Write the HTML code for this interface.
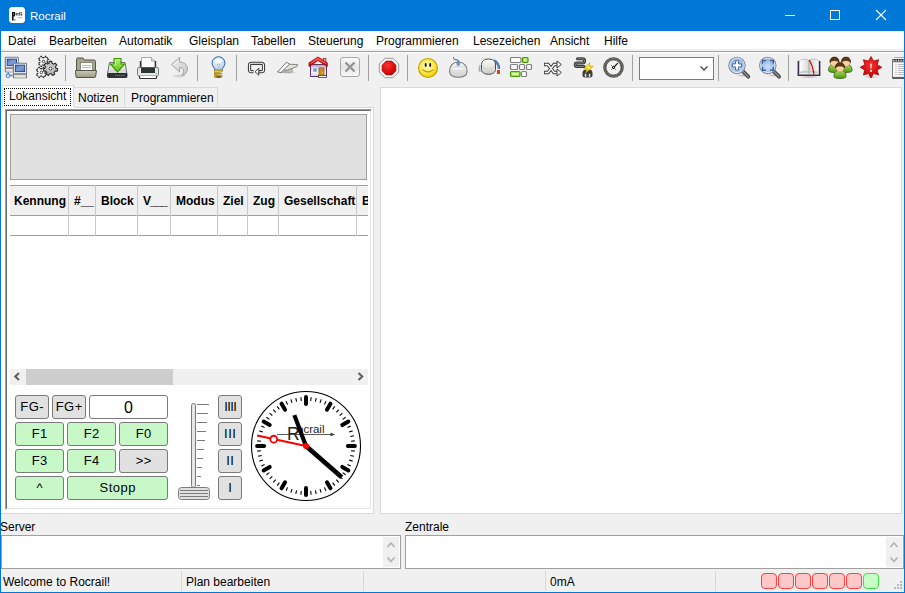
<!DOCTYPE html>
<html><head><meta charset="utf-8">
<style>
*{margin:0;padding:0;box-sizing:border-box}
html,body{width:905px;height:593px;overflow:hidden;background:#f0f0f0;font-family:"Liberation Sans",sans-serif;font-size:12px;color:#000}
.a{position:absolute}
#title{left:0;top:0;width:905px;height:31px;background:#0078d7}
#menu{left:1px;top:31px;width:903px;height:18px;background:#fff}
.mi{position:absolute;top:34px;font-size:12px;line-height:14px;white-space:nowrap}
#tbline{left:1px;top:51px;width:903px;height:1px;background:#a0a0a0}
.sep{position:absolute;top:55px;width:1px;height:26px;background:#a0a0a0}
.ic{position:absolute;top:56px;width:24px;height:24px}
.tab{position:absolute;top:87px;height:20px;border:1px solid #d9d9d9;border-bottom:none;background:#f0f0f0;line-height:18px;padding-left:4px;white-space:nowrap}
.btn{position:absolute;width:49px;height:24px;border:1px solid #7a7a7a;border-radius:3px;background:#c8f8c8;text-align:center;line-height:22px;font-size:13px;letter-spacing:0.5px;text-indent:0.5px}
.gray{background:#e1e1e1}
.sb{position:absolute;height:23px;background:#f0f0f0}
.col{position:absolute;top:0;width:1px;height:51px;background:#c8c8c8}
.th{position:absolute;top:9px;font-weight:bold;font-size:12px;line-height:14px;white-space:nowrap}
.led{position:absolute;top:573px;width:16px;height:16px;border:1px solid #ff4040;background:#ffc8c8;border-radius:4px}
</style></head><body>
<!-- window border -->
<div class="a" style="left:0;top:0;width:1px;height:593px;background:#0078d7"></div>
<div class="a" style="left:904px;top:0;width:1px;height:593px;background:#0078d7"></div>
<div class="a" style="left:0;top:592px;width:905px;height:1px;background:#0078d7"></div>

<div id="title" class="a">
  <svg class="a" style="left:9px;top:7px" width="16" height="16"><path d="M2 0h12l2 2v12l-2 2H2l-2-2V2z" fill="#fff"/><g fill="#111"><rect x="3" y="5" width="1.6" height="8.5"/><rect x="3" y="5" width="3" height="1.2"/><rect x="5" y="5.5" width="1.2" height="2.5"/><rect x="3" y="8" width="3" height="1.3"/><rect x="5.3" y="12.3" width="1" height="1.2"/></g><g fill="#333"><rect x="6.8" y="6" width="1" height="2.4"/><rect x="8.2" y="6" width="1.4" height="0.9"/><rect x="8.2" y="7.6" width="1.4" height="0.9"/><rect x="10.2" y="5.3" width="1" height="3.2"/><rect x="11.5" y="5.3" width="1.6" height="0.9"/><rect x="11.8" y="6.8" width="1.4" height="1.7"/></g><rect x="9" y="10" width="4.5" height="0.8" fill="#aaa"/></svg>
  <div class="a" style="left:30px;top:9px;color:#fff;font-size:11.5px;line-height:14px">Rocrail</div>
  <div class="a" style="left:785px;top:15px;width:10px;height:1px;background:#fff"></div>
  <div class="a" style="left:830px;top:10px;width:10px;height:10px;border:1px solid #fff"></div>
  <svg class="a" style="left:875px;top:9px" width="12" height="12"><path d="M1 1L11 11M11 1L1 11" stroke="#fff" stroke-width="1.1"/></svg>
</div>

<div id="menu" class="a"></div>
<div class="mi" style="left:8px">Datei</div>
<div class="mi" style="left:49px">Bearbeiten</div>
<div class="mi" style="left:119px">Automatik</div>
<div class="mi" style="left:189px">Gleisplan</div>
<div class="mi" style="left:251px">Tabellen</div>
<div class="mi" style="left:308px">Steuerung</div>
<div class="mi" style="left:376px">Programmieren</div>
<div class="mi" style="left:473px">Lesezeichen</div>
<div class="mi" style="left:550px">Ansicht</div>
<div class="mi" style="left:604px">Hilfe</div>
<div id="tbline" class="a"></div><div class="a" style="left:1px;top:50px;width:903px;height:1px;background:#f4f4f4"></div><div class="a" style="left:1px;top:52px;width:903px;height:1px;background:#fff"></div>

<!-- toolbar separators -->
<div class="sep" style="left:65px"></div>
<div class="sep" style="left:197px"></div>
<div class="sep" style="left:236px"></div>
<div class="sep" style="left:368px"></div>
<div class="sep" style="left:407px"></div>
<div class="sep" style="left:632px"></div>
<div class="sep" style="left:718px"></div>
<div class="sep" style="left:788px"></div>

<!-- combo -->
<div class="a" style="left:639px;top:57px;width:75px;height:23px;background:#fff;border:1px solid #7a7a7a"></div>
<!-- ICONS --><svg class="a" style="left:0;top:52px" width="904" height="32" viewBox="0 52 904 32"><defs>
<linearGradient id="gScr" x1="0" y1="0" x2="1" y2="1"><stop offset="0" stop-color="#4a70b8"/><stop offset="0.5" stop-color="#7f9fd6"/><stop offset="1" stop-color="#4a74bc"/></linearGradient>
<linearGradient id="gFold" x1="0" y1="0" x2="0" y2="1"><stop offset="0" stop-color="#c8c8b4"/><stop offset="1" stop-color="#9a9a84"/></linearGradient>
<linearGradient id="gDrive" x1="0" y1="0" x2="0" y2="1"><stop offset="0" stop-color="#f4f4f4"/><stop offset="1" stop-color="#d6d6d6"/></linearGradient>
<linearGradient id="gGreen" x1="0" y1="0" x2="0" y2="1"><stop offset="0" stop-color="#b8f080"/><stop offset="1" stop-color="#5cc010"/></linearGradient>
<radialGradient id="gBulb" cx="0.45" cy="0.35" r="0.6"><stop offset="0" stop-color="#ffffff"/><stop offset="1" stop-color="#b6cdea"/></radialGradient>
<linearGradient id="gGold" x1="0" y1="0" x2="0" y2="1"><stop offset="0" stop-color="#f0dc60"/><stop offset="1" stop-color="#c4a000"/></linearGradient>
<linearGradient id="gWall" x1="0" y1="0" x2="0" y2="1"><stop offset="0" stop-color="#c0a0cc"/><stop offset="0.7" stop-color="#f6f0f8"/><stop offset="1" stop-color="#e0c8e6"/></linearGradient>
<linearGradient id="gXbox" x1="0" y1="0" x2="0" y2="1"><stop offset="0" stop-color="#fbfbfb"/><stop offset="0.5" stop-color="#e6e6e6"/><stop offset="1" stop-color="#fafafa"/></linearGradient>
<linearGradient id="gKnob" x1="0" y1="0" x2="0" y2="1"><stop offset="0" stop-color="#fafaf8"/><stop offset="0.6" stop-color="#e0e0dc"/><stop offset="1" stop-color="#c8c8c4"/></linearGradient>
<linearGradient id="gPageL" x1="0" y1="0" x2="1" y2="0"><stop offset="0" stop-color="#fff"/><stop offset="1" stop-color="#d8d8d8"/></linearGradient><linearGradient id="gPageR" x1="0" y1="0" x2="1" y2="0"><stop offset="0" stop-color="#d0d0d0"/><stop offset="1" stop-color="#fafafa"/></linearGradient>
<radialGradient id="gGear" cx="0.4" cy="0.4" r="0.7"><stop offset="0" stop-color="#e8e8e8"/><stop offset="1" stop-color="#9a9a98"/></radialGradient>
<linearGradient id="gUndo" x1="0" y1="0" x2="1" y2="1"><stop offset="0" stop-color="#f6f6f6"/><stop offset="1" stop-color="#c4c4c4"/></linearGradient>
<linearGradient id="gRoof" x1="0" y1="0" x2="0" y2="1"><stop offset="0" stop-color="#ff4040"/><stop offset="1" stop-color="#c00000"/></linearGradient>
<radialGradient id="gRed" cx="0.4" cy="0.3" r="0.7"><stop offset="0" stop-color="#ff3030"/><stop offset="1" stop-color="#c00000"/></radialGradient>
<radialGradient id="gSmile" cx="0.45" cy="0.4" r="0.6"><stop offset="0" stop-color="#fffbd0"/><stop offset="0.6" stop-color="#fce94f"/><stop offset="1" stop-color="#e8c800"/></radialGradient>
<linearGradient id="gMouse" x1="0" y1="0" x2="0" y2="1"><stop offset="0" stop-color="#f8f8f8"/><stop offset="1" stop-color="#cfcfcf"/></linearGradient>
<radialGradient id="gLens" cx="0.5" cy="0.6" r="0.55"><stop offset="0" stop-color="#d0e0f6"/><stop offset="1" stop-color="#86ace0"/></radialGradient>
<linearGradient id="gBody" x1="0" y1="0" x2="0" y2="1"><stop offset="0" stop-color="#b0e070"/><stop offset="1" stop-color="#4e9a06"/></linearGradient>
<radialGradient id="gStar" cx="0.5" cy="0.4" r="0.6"><stop offset="0" stop-color="#ff3030"/><stop offset="1" stop-color="#b80000"/></radialGradient>
<radialGradient id="gShadow" cx="0.5" cy="0.5" r="0.5"><stop offset="0" stop-color="#000" stop-opacity="0.25"/><stop offset="1" stop-color="#000" stop-opacity="0"/></radialGradient>
</defs><path d="M8.3 72v2M9.5 75.5h4" stroke="#5a8fd6" stroke-width="1.4"/><circle cx="8" cy="75.7" r="1.8" fill="#dde8f6" stroke="#5a8fd6" stroke-width="1.2"/><rect x="5.3" y="57.3" width="13" height="10.5" rx="0.8" fill="#fff" stroke="#7b7b7b" stroke-width="1.1"/><rect x="7.1" y="59.099999999999994" width="9.4" height="6.6" fill="url(#gScr)" stroke="#1a3c8a" stroke-width="0.9"/><rect x="5.3" y="68.3" width="13" height="3.5" fill="#d8d8d4" stroke="#7b7b7b" stroke-width="1"/><path d="M6.3 69.6h11" stroke="#f4f4f4" stroke-width="0.6" stroke-dasharray="1 0.6"/><path d="M6.3 71.1h11" stroke="#fff" stroke-width="0.8"/><rect x="13.5" y="63.3" width="13" height="10.5" rx="0.8" fill="#fff" stroke="#7b7b7b" stroke-width="1.1"/><rect x="15.3" y="65.1" width="9.4" height="6.6" fill="url(#gScr)" stroke="#1a3c8a" stroke-width="0.9"/><rect x="13.5" y="74.3" width="13" height="3.5" fill="#d8d8d4" stroke="#7b7b7b" stroke-width="1"/><path d="M14.5 75.6h11" stroke="#f4f4f4" stroke-width="0.6" stroke-dasharray="1 0.6"/><path d="M14.5 77.1h11" stroke="#fff" stroke-width="0.8"/><polygon points="47.21,62.61 48.69,63.50 45.60,66.59 44.71,65.11 42.29,65.11 41.40,66.59 38.31,63.50 39.79,62.61 39.79,60.19 38.31,59.30 41.40,56.21 42.29,57.69 44.71,57.69 45.60,56.21 48.69,59.30 47.21,60.19" fill="#f6f6f6" stroke="#2a2a2a" stroke-width="1.2" stroke-linejoin="round" stroke-dasharray="2.2 0.6"/><circle cx="43.5" cy="61.4" r="1.3" fill="#fff" stroke="#333" stroke-width="0.9"/><polygon points="45.11,73.61 46.59,74.50 43.50,77.59 42.61,76.11 40.19,76.11 39.30,77.59 36.21,74.50 37.69,73.61 37.69,71.19 36.21,70.30 39.30,67.21 40.19,68.69 42.61,68.69 43.50,67.21 46.59,70.30 45.11,71.19" fill="#f6f6f6" stroke="#2a2a2a" stroke-width="1.2" stroke-linejoin="round" stroke-dasharray="2.2 0.6"/><circle cx="41.4" cy="72.4" r="1.3" fill="#fff" stroke="#333" stroke-width="0.9"/><polygon points="49.01,63.31 49.25,61.41 51.75,61.41 51.99,63.31 53.63,64.10 55.26,63.10 56.82,65.06 55.49,66.43 55.89,68.20 57.69,68.86 57.13,71.30 55.23,71.11 54.09,72.53 54.70,74.35 52.45,75.43 51.41,73.82 49.59,73.82 48.55,75.43 46.30,74.35 46.91,72.53 45.77,71.11 43.87,71.30 43.31,68.86 45.11,68.20 45.51,66.43 44.18,65.06 45.74,63.10 47.37,64.10" fill="url(#gGear)" stroke="#2e2e2e" stroke-width="1.1" stroke-linejoin="round"/><circle cx="50.5" cy="68.5" r="3.8" fill="none" stroke="#b8b8b8" stroke-width="1.2"/><circle cx="50.5" cy="68.5" r="1.5" fill="#fff" stroke="#222" stroke-width="0.9"/><path d="M76.5 74V59.5a1.5 1.5 0 0 1 1.5-1.5h5l1.5 2h9.5a1.5 1.5 0 0 1 1.5 1.5V74z" fill="#a4a490" stroke="#55554a"/><rect x="80.5" y="62.5" width="12" height="8" fill="#fff" stroke="#7a7a6a" stroke-width="0.8"/><path d="M82 65.5h9M82 67.5h9" stroke="#b5b5a8" stroke-width="0.9"/><path d="M75.5 70.5h21l-1 6.5a1 1 0 0 1-1 0.5H77a1 1 0 0 1-1-0.5z" fill="url(#gFold)" stroke="#55554a"/><path d="M109.5 62.5h15.5l2 11.5H107.5z" fill="url(#gDrive)" stroke="#6a6a6a" stroke-linejoin="round"/><path d="M110 71.5l2-1h11l2 1" fill="none" stroke="#bbb" stroke-width="0.6"/><rect x="107.5" y="73.5" width="19.5" height="4" rx="1" fill="#2e3436" stroke="#1a1a1a" stroke-width="0.8"/><path d="M115 75.5h10" stroke="#8a8a8a" stroke-width="0.7" stroke-dasharray="1.5 0.5"/><path d="M114 58.5h7v5.5h3.5l-7 8l-7-8h3.5z" fill="url(#gGreen)" stroke="#3f9a00" stroke-width="1.2" stroke-linejoin="round"/><path d="M115.5 60v5h-1.5" fill="none" stroke="#d8ffb0" stroke-width="0.7"/><path d="M141.5 57.5h10l3.5 3.5v7h-13.5z" fill="#fafafa" stroke="#9a9a9a" stroke-width="0.8"/><path d="M151.5 57.5v3.5h3.5" fill="#ddd" stroke="#9a9a9a" stroke-width="0.8"/><path d="M140.5 61v7M155.5 61v7" stroke="#333" stroke-width="1.4"/><rect x="137.5" y="67.5" width="21" height="8.5" rx="1.5" fill="#e8e8e8" stroke="#7a7a7a"/><rect x="141" y="67.5" width="14" height="5.5" fill="#2e3436"/><circle cx="156.3" cy="73.6" r="0.8" fill="#5ee04a"/><path d="M139.5 76v1.5a1 1 0 0 0 1 1h15a1 1 0 0 0 1-1V76" fill="#fff" stroke="#333" stroke-width="1.2"/><ellipse cx="179" cy="76" rx="8" ry="2" fill="url(#gShadow)" opacity="0.7"/><path d="M171.5 64.5L179.6 57.3V62.1C183 62 187.5 64 187.5 68.8C187.5 72 185 75 181.8 75.7C183 73.5 183.8 72 183.5 70C183.2 68.3 182 67.6 179.6 67.6V72Z" fill="url(#gUndo)" stroke="#9a9a9a" stroke-width="0.9" stroke-linejoin="round"/><g transform="translate(0 0.7)"><ellipse cx="218.5" cy="76.5" rx="5" ry="1.4" fill="url(#gShadow)"/><path d="M214.8 69.5c0-2.5-2.8-4-2.8-7a6.5 6.5 0 0 1 13 0c0 3-2.8 4.5-2.8 7z" fill="url(#gBulb)" stroke="#3465a4" stroke-width="1"/><ellipse cx="218.5" cy="59.8" rx="3.8" ry="1.6" fill="#fff" opacity="0.9"/><path d="M217 64.5c0-1.5 3-1.5 3 0s-1.5 1.5-1.5 3" fill="none" stroke="#7ea0cc" stroke-width="0.7"/><path d="M214.5 69.5h8l-0.3 1.6l-7.6 1.2l7.6 0.6l-7.6 1.4l7.6 0.6l-0.5 1.6h-7z" fill="url(#gGold)" stroke="#a08000" stroke-width="0.7" stroke-linejoin="round"/><path d="M216.5 76.2h4" stroke="#333" stroke-width="1.1"/></g><path d="M253.5 71.7H251.5a2 2 0 0 1-2-2V65.3a2 2 0 0 1 2-2H261.5a2 2 0 0 1 2 2V69.7a2 2 0 0 1-2 2H258" fill="none" stroke="#3a3a3a" stroke-width="3.2"/><path d="M253.5 71.7H251.5a2 2 0 0 1-2-2V65.3a2 2 0 0 1 2-2H261.5a2 2 0 0 1 2 2V69.7a2 2 0 0 1-2 2H258" fill="none" stroke="#fff" stroke-width="1.1"/><path d="M255 71.7l3.8-3.5v7z" fill="#fff" stroke="#3a3a3a" stroke-width="1" stroke-linejoin="round"/><ellipse cx="289" cy="72.5" rx="8" ry="1.5" fill="url(#gShadow)"/><path d="M280 72.5l12-4l0.5 3.5z" fill="#c8c8c0" stroke="#9a9a90" stroke-width="0.8" stroke-linejoin="round"/><path d="M284 67.5l5.5-3.2l8 0.2l-0.5 2l-12 4.5z" fill="#e4e4e0" stroke="#7a7a74" stroke-width="0.9" stroke-linejoin="round"/><path d="M277.5 72l9-9.8l3 2l-8.5 8.3z" fill="#f8f8f6" stroke="#6a6a64" stroke-width="0.9" stroke-linejoin="round"/><path d="M310.5 64.5h16v12h-16z" fill="url(#gWall)" stroke="#5c3566"/><rect x="312.8" y="67.8" width="4.4" height="4.4" fill="#729fcf" stroke="#fff" stroke-width="0.8"/><rect x="319" y="68" width="5" height="8.5" fill="#d08a2a" stroke="#8f5902" stroke-width="0.7"/><circle cx="322.6" cy="72.3" r="0.6" fill="#fce94f"/><rect x="318.5" y="75.5" width="8" height="2" fill="#fff" stroke="#3a3a3a" stroke-width="0.8"/><rect x="323.3" y="58.3" width="2.6" height="4.5" fill="#ccc" stroke="#a00" stroke-width="0.7"/><path d="M309 62.8l9-5.8l9.3 5.8v3.7l-9.3-5.9l-9 5.9z" fill="url(#gRoof)" stroke="#a40000" stroke-width="0.8" stroke-linejoin="round"/><path d="M310.5 63.5l7.5-4.8l8 4.8" fill="none" stroke="#ff9090" stroke-width="0.7"/><rect x="340.5" y="57.5" width="19" height="19" rx="2.5" fill="url(#gXbox)" stroke="#a8a8a8"/><path d="M345.5 62.5l9 9M354.5 62.5l-9 9" stroke="#939393" stroke-width="2.4"/><polygon points="398.70,72.02 393.02,77.70 384.98,77.70 379.30,72.02 379.30,63.98 384.98,58.30 393.02,58.30 398.70,63.98" fill="#f4f4f4" stroke="#9a9a9a" stroke-width="1"/><polygon points="395.93,70.87 391.87,74.93 386.13,74.93 382.07,70.87 382.07,65.13 386.13,61.07 391.87,61.07 395.93,65.13" fill="url(#gRed)" stroke="#a00000" stroke-width="0.6"/><circle cx="428" cy="68" r="9.5" fill="url(#gSmile)" stroke="#c4a000" stroke-width="1.1"/><rect x="424.8" y="63" width="1.8" height="3.8" rx="0.9" fill="#111"/><rect x="429.3" y="63" width="1.8" height="3.8" rx="0.9" fill="#111"/><path d="M422.5 69.5q5.5 5 11 0" fill="none" stroke="#c4a000" stroke-width="1.2"/><path d="M453.5 57.2c0 2 0.8 2.6 2.5 2.6h1.2c1 0 1.4 0.8 1.4 2" fill="none" stroke="#555" stroke-width="1"/><path d="M449.5 71c0-5 3.5-9 8.8-9s8.8 4 8.8 9c0 4-2.5 6.3-8.8 6.3s-8.8-2.3-8.8-6.3z" fill="url(#gMouse)" stroke="#7a7a7a" stroke-width="1.1"/><path d="M452 67.3q6.3-1.5 12.6 0" fill="none" stroke="#d0d0d0" stroke-width="0.6"/><path d="M453 68.5q5.3 1 10.6 0" fill="none" stroke="#fff" stroke-width="0.9"/><ellipse cx="458.3" cy="63.3" rx="1.4" ry="2.5" fill="#729fcf" stroke="#3465a4" stroke-width="0.5"/><path d="M494 60.5a9.5 9.5 0 0 1 5 8.5" fill="none" stroke="#5a82b8" stroke-width="2.6"/><path d="M480 72a9.5 9.5 0 0 1 0-7" fill="none" stroke="#9ab4d8" stroke-width="1.6"/><rect x="497" y="70" width="3" height="4" fill="#e83a20"/><path d="M481.5 64.5c0-3.5 3-5.5 7-5.5s7 2 7 5v5.5c0 3-3 4.8-7 4.8s-7-1.8-7-4.8z" fill="url(#gKnob)" stroke="#4a4a4a" stroke-width="1"/><path d="M482 65.5c1 2.5 3.5 3.5 6.5 3.5s5.5-1.5 6.5-4" fill="none" stroke="#c8c8c4" stroke-width="0.7"/><rect x="510.5" y="57.5" width="10.5" height="5" rx="1" fill="#fafafa" stroke="#808080" stroke-width="1.2"/><rect x="522.5" y="57.5" width="5.5" height="5" rx="1" fill="#a0e060" stroke="#4e9a06" stroke-width="1.2"/><rect x="524" y="59" width="2.5" height="2" fill="#d8f8b0"/><rect x="510.5" y="64.5" width="7" height="5" rx="1" fill="#fafafa" stroke="#808080" stroke-width="1.2"/><rect x="519.5" y="64.5" width="5" height="5" rx="1" fill="#fafafa" stroke="#808080" stroke-width="1.2"/><rect x="526.5" y="64.5" width="5" height="5" rx="1" fill="#fafafa" stroke="#808080" stroke-width="1.2"/><rect x="510.5" y="71.5" width="9.5" height="5" rx="1" fill="#a0e060" stroke="#4e9a06" stroke-width="1.2"/><rect x="512" y="73" width="6.5" height="2" fill="#d8f8b0"/><rect x="521.5" y="71.5" width="5" height="5" rx="1" fill="#fafafa" stroke="#808080" stroke-width="1.2"/><path d="M544 64.5h4l6 8h3.5M544 72.5h4l6-8h3.5" fill="none" stroke="#3a3a3a" stroke-width="3.4"/><path d="M544.8 64.5h3.2l6 8h3.5M544.8 72.5h3.2l6-8h3.5" fill="none" stroke="#fff" stroke-width="1.4"/><path d="M557 61l4.3 3.5l-4.3 3.5z M557 69l4.3 3.5l-4.3 3.5z" fill="#fff" stroke="#3a3a3a" stroke-width="1" stroke-linejoin="round"/><path d="M577.5 58.7H582.5a2.15 2.15 0 0 1 0 4.3H577a1.75 1.75 0 0 0 0 3.5H584" fill="none" stroke="#3a3d3a" stroke-width="3" stroke-linecap="round"/><path d="M577.5 58.7H582.5a2.15 2.15 0 0 1 0 4.3H577a1.75 1.75 0 0 0 0 3.5H584" fill="none" stroke="#9a9a9a" stroke-width="0.7"/><path d="M582.5 73c0-2 1-3.3 2.7-3.3c1 0 1.3 0.5 2.3 0.5s1.3-0.5 2.3-0.5c1.7 0 2.7 1.3 2.7 3.3v2.5c0 1.2-1 2-2.5 2h-5c-1.5 0-2.5-0.8-2.5-2z" fill="#3a3d3a"/><rect x="584.8" y="73.8" width="1.5" height="3" fill="#eee"/><rect x="588.8" y="73.8" width="1.5" height="3" fill="#eee"/><path d="M589.8 62.8l-6 6h3.7l-1.8 4l7.5-6.5h-3.8z" fill="#fce94f" stroke="#c4a000" stroke-width="0.8" stroke-linejoin="round"/><circle cx="613.5" cy="67.5" r="9" fill="#f2f2f0" stroke="#4a4c48" stroke-width="2.6"/><circle cx="613.5" cy="67.5" r="9" fill="none" stroke="#8a8c88" stroke-width="0.7"/><circle cx="613.5" cy="67.5" r="7.4" fill="none" stroke="#333" stroke-width="0.6"/><path d="M611 65l5 5M611 70l2.5-2.5" stroke="#444" stroke-width="0.6"/><path d="M613.5 67.5l4.3-4.3" stroke="#111" stroke-width="1.1"/><rect x="612.2" y="66.2" width="2.6" height="2.6" fill="#111" transform="rotate(45 613.5 67.5)"/><circle cx="613.5" cy="67.5" r="0.6" fill="#fff"/><path d="M700.5 66.5l3.5 3.5l3.5-3.5" fill="none" stroke="#333" stroke-width="1.1"/><ellipse cx="743" cy="75.4" rx="7" ry="1.6" fill="url(#gShadow)"/><path d="M743 71.4l5.3 5.3" stroke="#4a4a4a" stroke-width="3.8" stroke-linecap="round"/><path d="M743 71.4l5.3 5.3" stroke="#9a9a9a" stroke-width="1.2" stroke-linecap="round" stroke-dasharray="1 0.8"/><circle cx="737" cy="65.4" r="8.2" fill="url(#gLens)" stroke="#8a8a8a" stroke-width="1.1"/><circle cx="737" cy="65.4" r="7.2" fill="none" stroke="#f4f8fc" stroke-width="0.8"/><path d="M735.5 60.8h3v3.1h3.1v3h-3.1v3.1h-3v-3.1h-3.1v-3h3.1z" fill="#fff" stroke="#3465a4" stroke-width="0.9"/><ellipse cx="773.8" cy="75.4" rx="7" ry="1.6" fill="url(#gShadow)"/><path d="M773.8 71.4l5.3 5.3" stroke="#4a4a4a" stroke-width="3.8" stroke-linecap="round"/><path d="M773.8 71.4l5.3 5.3" stroke="#9a9a9a" stroke-width="1.2" stroke-linecap="round" stroke-dasharray="1 0.8"/><circle cx="767.8" cy="65.4" r="8.2" fill="url(#gLens)" stroke="#8a8a8a" stroke-width="1.1"/><circle cx="767.8" cy="65.4" r="7.2" fill="none" stroke="#f4f8fc" stroke-width="0.8"/><path d="M762.5 63.8v-3.3h3.3M770 60.5h3.3v3.3M773.3 67v3.3h-3.3M765.8 70.3h-3.3V67" fill="none" stroke="#3465a4" stroke-width="1.4"/><ellipse cx="809" cy="77" rx="10" ry="1.5" fill="url(#gShadow)"/><path d="M798.3 61v14.2h21.4V61" fill="#f0f0f0" stroke="#3c2a4a" stroke-width="1.4"/><path d="M799.5 60.5c3-1.8 7-1.8 9.5 0v12c-2.5-1.5-6.5-1.5-9.5 0z" fill="url(#gPageL)" stroke="#9a9a9a" stroke-width="0.5"/><path d="M809 60.5c2.5-1.8 6.5-1.8 9.5 0v12c-3-1.5-7-1.5-9.5 0z" fill="url(#gPageR)" stroke="#9a9a9a" stroke-width="0.5"/><path d="M799 73.5c3-1.5 7-1.5 10 0c3-1.5 7-1.5 10 0" fill="none" stroke="#bbb" stroke-width="0.8"/><path d="M809.2 60c1.5 3 3 5 3.5 8s1 4 1.2 6.5" fill="none" stroke="#cc0000" stroke-width="1.2"/><path d="M828.5 70.5c0-4.5 2.5-6.5 6-6.5s6 2 6 6.5c0 1.2-2 2-6 2s-6-0.8-6-2z" fill="url(#gBody)" stroke="#2e5a06" stroke-width="0.8"/><ellipse cx="834.5" cy="62" rx="4.3" ry="4.6" fill="#fcd0a0" stroke="#9a6a40" stroke-width="0.5"/><path d="M829.9 62.5c-0.3-3.5 1.8-5.5 4.6-5.5s4.9 2 4.6 5.5c-1-1.2-2.5-2-4.6-2s-3.6 0.8-4.6 2z" fill="#5a3818" stroke="#2a1808" stroke-width="0.5"/><path d="M840 70.5c0-4.5 2.5-6.5 6-6.5s6 2 6 6.5c0 1.2-2 2-6 2s-6-0.8-6-2z" fill="url(#gBody)" stroke="#2e5a06" stroke-width="0.8"/><ellipse cx="846" cy="62" rx="4.3" ry="4.6" fill="#fcd0a0" stroke="#9a6a40" stroke-width="0.5"/><path d="M841.4 62.5c-0.3-3.5 1.8-5.5 4.6-5.5s4.9 2 4.6 5.5c-1-1.2-2.5-2-4.6-2s-3.6 0.8-4.6 2z" fill="#5a3818" stroke="#2a1808" stroke-width="0.5"/><path d="M834 76.5c0-4.5 2.5-6.5 6-6.5s6 2 6 6.5c0 1.2-2 2-6 2s-6-0.8-6-2z" fill="url(#gBody)" stroke="#2e5a06" stroke-width="0.8"/><ellipse cx="840" cy="67.5" rx="4.3" ry="4.6" fill="#fcd0a0" stroke="#9a6a40" stroke-width="0.5"/><path d="M835.4 68.0c-0.3-3.5 1.8-5.5 4.6-5.5s4.9 2 4.6 5.5c-1-1.2-2.5-2-4.6-2s-3.6 0.8-4.6 2z" fill="#5a3818" stroke="#2a1808" stroke-width="0.5"/><ellipse cx="871" cy="77" rx="7" ry="1.5" fill="url(#gShadow)"/><polygon points="871.00,56.50 873.60,61.02 878.64,59.66 877.28,64.70 881.80,67.30 877.28,69.90 878.64,74.94 873.60,73.58 871.00,78.10 868.40,73.58 863.36,74.94 864.72,69.90 860.20,67.30 864.72,64.70 863.36,59.66 868.40,61.02" fill="url(#gStar)" stroke="#a40000" stroke-width="0.7" stroke-linejoin="round"/><path d="M870.3 63.8h1.5l-0.3 5h-0.9z" fill="#fff"/><rect x="870.2" y="70" width="1.7" height="1.8" fill="#fff"/><rect x="892.5" y="59.5" width="14" height="18.5" fill="#fafafa" stroke="#7a7a7a" stroke-width="1"/><path d="M892.5 78h14" stroke="#222" stroke-width="1.2"/><path d="M894 57.5h12" stroke="#999" stroke-width="0.8"/><path d="M894.2 59v2.5M895.9 59v2.5M897.6 59v2.5M899.3 59v2.5M901 59v2.5M902.7 59v2.5" stroke="#333" stroke-width="1"/><path d="M893 61.8h12" stroke="#444" stroke-width="0.8"/><path d="M895.5 64.5h1M895.5 66.5h1M895.5 68.5h1M895.5 70.5h1M895.5 72.5h1M895.5 74.5h1" stroke="#888" stroke-width="0.8"/><path d="M898 64.5h7M898 66.5h7M898 68.5h7M898 70.5h7M898 72.5h7M898 74.5h7" stroke="#aaa" stroke-width="0.8"/><path d="M893 76.5h12" stroke="#ddd" stroke-width="0.6"/></svg><!-- /ICONS -->

<!-- tabs -->
<div class="tab" style="left:73px;width:52px;line-height:20px">Notizen</div>
<div class="tab" style="left:124px;width:94px;line-height:20px;padding-left:6px">Programmieren</div>
<div class="a" style="left:2px;top:85px;width:72px;height:23px;background:#fff;border:1px solid #d9d9d9;border-bottom:none"></div>
<div class="a" style="left:4px;top:88px;width:67px;height:18px;border:1px dotted #000"></div>
<div class="a" style="left:9px;top:89px;line-height:14px">Lokansicht</div>

<!-- left page -->
<div class="a" style="left:1px;top:107px;width:373px;height:407px;background:#fff;border:1px solid #d9d9d9;border-left:none"></div><div class="a" style="left:1px;top:107px;width:73px;height:1px;background:#fff"></div>
<div class="a" style="left:5px;top:109px;width:367px;height:401px;background:#fff;border-top:1px solid #a0a0a0;border-left:1px solid #a0a0a0;border-right:1px solid #fff;border-bottom:1px solid #fff"><div style="width:100%;height:100%;border-top:1px solid #696969;border-left:1px solid #696969;border-right:1px solid #e3e3e3;border-bottom:1px solid #e3e3e3"></div></div>


<!-- left page contents -->
<div class="a" style="left:10px;top:114px;width:357px;height:66px;background:#e1e1e1;border:1px solid #a0a0a0;border-right-color:#a0a0a0"></div>
<div class="a" style="left:10px;top:185px;width:358px;height:51px;overflow:hidden">
  <div class="a" style="left:0;top:0;width:380px;height:31px;background:#f0f0f0;border-top:1px solid #a0a0a0;border-bottom:1px solid #a0a0a0"></div>
  <div class="a" style="left:0;top:50px;width:380px;height:1px;background:#a0a0a0"></div>
  <div class="col" style="left:58px"></div>
  <div class="col" style="left:85px"></div>
  <div class="col" style="left:127px"></div>
  <div class="col" style="left:160px"></div>
  <div class="col" style="left:207px"></div>
  <div class="col" style="left:237px"></div>
  <div class="col" style="left:268px"></div>
  <div class="col" style="left:346px"></div>
  <div class="th" style="left:4px">Kennung</div>
  <div class="th" style="left:64px">#__</div>
  <div class="th" style="left:91px">Block</div>
  <div class="th" style="left:133px;letter-spacing:-1px">V___</div>
  <div class="th" style="left:166px">Modus</div>
  <div class="th" style="left:213px">Ziel</div>
  <div class="th" style="left:243px">Zug</div>
  <div class="th" style="left:274px">Gesellschaft</div>
  <div class="th" style="left:352px">B</div>
</div>
<!-- hscroll -->
<div class="a" style="left:10px;top:369px;width:358px;height:16px;background:#f0f0f0"></div>
<div class="a" style="left:26px;top:369px;width:147px;height:16px;background:#cdcdcd"></div>
<svg class="a" style="left:0;top:360px" width="380" height="30" viewBox="0 360 380 30"><path d="M19 373L15.3 376.5L19 380M358.5 373L362.2 376.5L358.5 380" stroke="#606060" stroke-width="2.1" fill="none"/></svg>

<!-- buttons -->
<div class="btn gray" style="left:15px;top:395px;width:34px">FG-</div>
<div class="btn gray" style="left:52px;top:395px;width:34px">FG+</div>
<div class="btn" style="left:89px;top:395px;width:79px;background:#fff;font-size:16px;line-height:24px">0</div>
<div class="btn" style="left:15px;top:422px">F1</div>
<div class="btn" style="left:67px;top:422px">F2</div>
<div class="btn" style="left:119px;top:422px">F0</div>
<div class="btn" style="left:15px;top:449px">F3</div>
<div class="btn" style="left:67px;top:449px">F4</div>
<div class="btn gray" style="left:119px;top:449px">&gt;&gt;</div>
<div class="btn" style="left:15px;top:476px">^</div>
<div class="btn" style="left:67px;top:476px;width:101px">Stopp</div>

<!-- slider -->
<svg class="a" style="left:175px;top:395px" width="40" height="110">
 <rect x="16.5" y="8.5" width="4" height="84" rx="2" fill="#e6e6e6" stroke="#7a7a7a"/>
 <g stroke="#7a7a7a" stroke-width="1">
  <path d="M22 9.5h12M22 18.5h11M22 27.5h10M22 36.5h9M22 45.5h8M22 54.5h7M22 63.5h6M22 72.5h5M22 81.5h4M22 90.5h3"/>
 </g>
 <rect x="3.5" y="92.5" width="31" height="12" rx="3" fill="#e1e1e1" stroke="#7a7a7a"/>
 <path d="M5 95.5h28M5 98.5h28M5 101.5h28" stroke="#7a7a7a"/>
</svg>
<div class="btn gray" style="left:218px;top:395px;width:24px;letter-spacing:-0.6px">IIII</div>
<div class="btn gray" style="left:218px;top:422px;width:24px">III</div>
<div class="btn gray" style="left:218px;top:449px;width:24px">II</div>
<div class="btn gray" style="left:218px;top:476px;width:24px">I</div>

<!-- clock -->
<svg class="a" style="left:250px;top:390px" width="112" height="112"><circle cx="56" cy="56" r="54.5" fill="#fff" stroke="#000" stroke-width="1.1"/><path d="M60.74 10.95L61.12 7.27M65.42 11.69L66.19 8.07M70.00 12.92L71.14 9.40M74.43 14.62L75.93 11.24M82.63 19.35L84.80 16.36M86.31 22.34L88.79 19.59M89.66 25.69L92.41 23.21M92.65 29.37L95.64 27.20M97.38 37.57L100.76 36.07M99.08 42.00L102.60 40.86M100.31 46.58L103.93 45.81M101.05 51.26L104.73 50.88M101.05 60.74L104.73 61.12M100.31 65.42L103.93 66.19M99.08 70.00L102.60 71.14M97.38 74.43L100.76 75.93M92.65 82.63L95.64 84.80M89.66 86.31L92.41 88.79M86.31 89.66L88.79 92.41M82.63 92.65L84.80 95.64M74.43 97.38L75.93 100.76M70.00 99.08L71.14 102.60M65.42 100.31L66.19 103.93M60.74 101.05L61.12 104.73M51.26 101.05L50.88 104.73M46.58 100.31L45.81 103.93M42.00 99.08L40.86 102.60M37.57 97.38L36.07 100.76M29.37 92.65L27.20 95.64M25.69 89.66L23.21 92.41M22.34 86.31L19.59 88.79M19.35 82.63L16.36 84.80M14.62 74.43L11.24 75.93M12.92 70.00L9.40 71.14M11.69 65.42L8.07 66.19M10.95 60.74L7.27 61.12M10.95 51.26L7.27 50.88M11.69 46.58L8.07 45.81M12.92 42.00L9.40 40.86M14.62 37.57L11.24 36.07M19.35 29.37L16.36 27.20M22.34 25.69L19.59 23.21M25.69 22.34L23.21 19.59M29.37 19.35L27.20 16.36M37.57 14.62L36.07 11.24M42.00 12.92L40.86 9.40M46.58 11.69L45.81 8.07M51.26 10.95L50.88 7.27" stroke="#000" stroke-width="1.1"/><path d="M56.00 14.10L56.00 7.10M76.95 19.71L80.45 13.65M92.29 35.05L98.35 31.55M97.90 56.00L104.90 56.00M92.29 76.95L98.35 80.45M76.95 92.29L80.45 98.35M56.00 97.90L56.00 104.90M35.05 92.29L31.55 98.35M19.71 76.95L13.65 80.45M14.10 56.00L7.10 56.00M19.71 35.05L13.65 31.55M35.05 19.71L31.55 13.65" stroke="#000" stroke-width="4" stroke-linecap="round"/><text x="37" y="50" font-family="Liberation Sans" font-size="17.5" fill="#222">R</text><text x="47" y="43.2" font-family="Liberation Sans" font-size="11.5" fill="#222">ocrail</text><path d="M27 44.5H82" stroke="#333" stroke-width="0.8"/><path d="M80.5 42.8L85 44.5L80.5 46.2Z" fill="#333"/><path d="M56.00 56.00L44.34 25.13" stroke="#000" stroke-width="4.2" stroke-linecap="butt"/><path d="M56.00 56.00L91.74 87.29" stroke="#000" stroke-width="4.7" stroke-linecap="butt"/><path d="M56.00 56.00L7.09 45.60" stroke="#f00" stroke-width="2" stroke-linecap="butt"/><circle cx="23.72" cy="49.14" r="3.4" fill="#fff" stroke="#f00" stroke-width="1.8"/><circle cx="56" cy="56" r="3" fill="#f00"/></svg>
<!-- right canvas -->
<div class="a" style="left:380px;top:87px;width:522px;height:427px;background:#fff;border:1px solid #d9d9d9"></div>

<!-- bottom labels -->
<div class="a" style="left:0px;top:520px;line-height:14px">Server</div>
<div class="a" style="left:405px;top:520px;line-height:14px">Zentrale</div>
<div class="a" style="left:1px;top:535px;width:400px;height:34px;background:#fff;border:1px solid #a0a0a0"></div>
<div class="a" style="left:405px;top:535px;width:499px;height:34px;background:#fff;border:1px solid #a0a0a0"></div>


<div class="a" style="left:383px;top:537px;width:16px;height:30px;background:#f0f0f0"></div>
<div class="a" style="left:886px;top:537px;width:16px;height:30px;background:#f0f0f0"></div>
<svg class="a" style="left:0;top:530px" width="905" height="63" viewBox="0 530 905 63">
<path d="M387.5 547l3.5-4l3.5 4M387.5 557.5l3.5 4l3.5-4M890.5 547l3.5-4l3.5 4M890.5 557.5l3.5 4l3.5-4" fill="none" stroke="#b4b4b4" stroke-width="1.8"/>

</svg>

<!-- status bar -->
<div class="a" style="left:1px;top:569px;width:903px;height:23px;background:#f0f0f0"></div>
<div class="a" style="left:3px;top:575px;line-height:14px">Welcome to Rocrail!</div>
<div class="a" style="left:186px;top:575px;line-height:14px">Plan bearbeiten</div>
<div class="a" style="left:550px;top:575px;line-height:14px">0mA</div>
<div class="a" style="left:181px;top:571px;width:1px;height:20px;background:#d7d7d7"></div>
<div class="a" style="left:363px;top:571px;width:1px;height:20px;background:#d7d7d7"></div>
<div class="a" style="left:545px;top:571px;width:1px;height:20px;background:#d7d7d7"></div>
<div class="a" style="left:715px;top:571px;width:1px;height:20px;background:#d7d7d7"></div>
<div class="led" style="left:761px"></div>
<div class="led" style="left:778px"></div>
<div class="led" style="left:795px"></div>
<div class="led" style="left:812px"></div>
<div class="led" style="left:829px"></div>
<div class="led" style="left:846px"></div>
<div class="led" style="left:863px;border-color:#40e040;background:#c8ffc8"></div>
<svg class="a" style="left:890px;top:578px" width="14" height="14" viewBox="890 578 14 14"><g fill="#b8b8b8"><rect x="900" y="581" width="2" height="2"/><rect x="897" y="584" width="2" height="2"/><rect x="900" y="584" width="2" height="2"/><rect x="894" y="587" width="2" height="2"/><rect x="897" y="587" width="2" height="2"/><rect x="900" y="587" width="2" height="2"/></g></svg>
</body></html>
